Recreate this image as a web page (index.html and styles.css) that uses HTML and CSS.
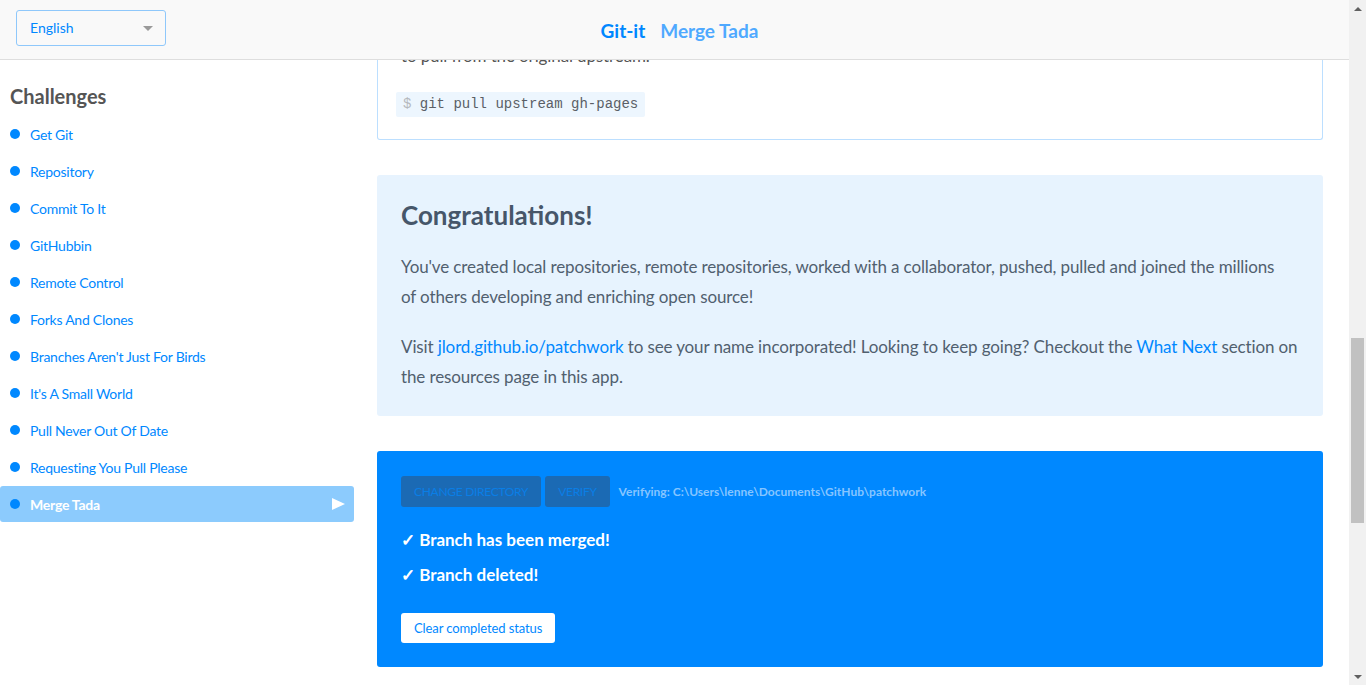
FILE: index.html
```html
<!DOCTYPE html>
<html lang="en">
<head>
<meta charset="utf-8">
<title>Git-it — Merge Tada</title>
<link rel="stylesheet" href="styles.css">
</head>
<body>
<header class="topbar">
  <div class="lang">
    <span class="lang-label">English</span>
    <span class="lang-caret"></span>
  </div>
  <h1 class="title"><span class="title-app">Git-it</span><span class="title-challenge">Merge Tada</span></h1>
</header>

<nav class="sidebar">
  <h2 class="sidebar-heading">Challenges</h2>
  <ul class="challenge-list">
    <li class="challenge"><span class="dot"></span>Get Git</li>
    <li class="challenge"><span class="dot"></span>Repository</li>
    <li class="challenge"><span class="dot"></span>Commit To It</li>
    <li class="challenge"><span class="dot"></span>GitHubbin</li>
    <li class="challenge"><span class="dot"></span>Remote Control</li>
    <li class="challenge"><span class="dot"></span>Forks And Clones</li>
    <li class="challenge"><span class="dot"></span>Branches Aren't Just For Birds</li>
    <li class="challenge"><span class="dot"></span>It's A Small World</li>
    <li class="challenge"><span class="dot"></span>Pull Never Out Of Date</li>
    <li class="challenge"><span class="dot"></span>Requesting You Pull Please</li>
    <li class="challenge active"><span class="dot"></span>Merge Tada<span class="arrow"></span></li>
  </ul>
</nav>

<main class="content">
  <section class="card lesson">
    <p>If anyone else has made changes to the original repository since you forked it, you'll want<br>to pull from the original upstream.</p>
    <div class="cmd"><code><span class="prompt">$</span> git pull upstream gh-pages</code></div>
  </section>

  <section class="card congrats">
    <h2 class="congrats-title">Congratulations!</h2>
    <p>You've created local repositories, remote repositories, worked with a collaborator, pushed, pulled and joined the millions of&nbsp;others developing and enriching open source!</p>
    <p>Visit <a href="#">jlord.github.io/patchwork</a> to see your name incorporated! Looking to keep going? Checkout the <a href="#">What Next</a> section on the resources page in this app.</p>
  </section>

  <section class="card verify">
    <div class="verify-bar">
      <button class="btn-dim">Change Directory</button>
      <button class="btn-dim">Verify</button>
      <span class="verify-path">Verifying: C:\Users\lenne\Documents\GitHub\patchwork</span>
    </div>
    <p class="status">✓ Branch has been merged!</p>
    <p class="status">✓ Branch deleted!</p>
    <button class="btn-clear">Clear completed status</button>
  </section>
</main>

<div class="scrollbar" aria-hidden="true">
  <span class="scroll-btn"><span class="tri-up"></span></span>
  <span class="scroll-track"><span class="scroll-thumb"></span></span>
  <span class="scroll-btn"><span class="tri-down"></span></span>
</div>
</body>
</html>
```

FILE: styles.css
```css
body {
  margin: 0;
  font-family: Lato, "Open Sans", sans-serif;
  color: #4f5e70;
  background: #fff;
}

/* ---------- top bar ---------- */
.topbar {
  position: fixed;
  top: 0;
  left: 0;
  right: 17px;
  height: 59px;
  background: #f9f9f9;
  border-bottom: 1px solid #dedede;
  display: grid;
  grid-template-columns: 1fr auto 1fr;
  align-items: center;
  z-index: 10;
}
.lang {
  grid-column: 1;
  justify-self: start;
  align-self: start;
  margin: 10px 0 0 16px;
  box-sizing: border-box;
  width: 150px;
  height: 36px;
  border: 1px solid #8fc8fb;
  border-radius: 3px;
  display: flex;
  align-items: center;
  padding: 0 12px 0 13px;
  font-size: 14px;
  color: #0088ff;
}
.lang-label {
  flex: 1;
  margin-top: -2px;
}
.lang-caret {
  width: 0;
  height: 0;
  border-left: 5px solid transparent;
  border-right: 5px solid transparent;
  border-top: 5px solid #9a9a9a;
}
.title {
  grid-column: 2;
  margin: 2px 0 0;
  padding-left: 10px;
  font-size: 19px;
  font-weight: 700;
  line-height: 24px;
  display: flex;
  gap: 15px;
}
.title-app {
  color: #0087ff;
}
.title-challenge {
  color: #4fa9ff;
}

/* ---------- sidebar ---------- */
.sidebar {
  position: fixed;
  top: 60px;
  left: 0;
  bottom: 0;
  width: 354px;
  padding-top: 24px;
  background: #fff;
  z-index: 5;
}
.sidebar-heading {
  margin: 0 0 8px 10px;
  font-size: 20px;
  line-height: 24px;
  font-weight: 700;
  color: #555;
}
.challenge-list {
  list-style: none;
  margin: 0;
  padding: 0;
  display: flex;
  flex-direction: column;
  gap: 1px;
}
.challenge {
  height: 36px;
  display: flex;
  align-items: center;
  font-size: 14px;
  letter-spacing: -0.25px;
  color: #0088ff;
  border-radius: 3px;
}
.dot {
  width: 10px;
  height: 10px;
  border-radius: 50%;
  background: #0088ff;
  margin: -1px 10px 0 10px;
  flex: none;
}
.challenge.active {
  background: #8ccbfd;
  color: #fff;
  font-weight: 700;
}
.arrow {
  margin-left: auto;
  margin-right: 9px;
  width: 0;
  height: 0;
  border-left: 13px solid #fff;
  border-top: 6px solid transparent;
  border-bottom: 6px solid transparent;
}

/* ---------- content ---------- */
.content {
  margin-left: 377px;
  width: 946px;
  display: flex;
  flex-direction: column;
  gap: 35px;
}
.card {
  border-radius: 3px;
}
.lesson {
  border: 1px solid #bcdfff;
  border-top: none;
  border-radius: 0 0 3px 3px;
  padding: 11px 23px 22px;
  color: #555;
}
.lesson p {
  margin: 0 0 21px;
  font-size: 17px;
  line-height: 30px;
  letter-spacing: -0.12px;
}
.cmd code {
  display: inline-block;
  margin-left: -5px;
  padding: 0 7px;
  height: 25px;
  line-height: 25px;
  background: #edf6fe;
  border-radius: 2px;
  font-family: "Liberation Mono", "Courier New", monospace;
  font-size: 14px;
  color: #5a5f66;
}
.prompt {
  color: #b5b9bd;
}

.congrats {
  background: #e7f3fe;
  padding: 24px 24px 24px;
}
.congrats-title {
  margin: 0 0 21px;
  font-size: 26px;
  line-height: 32px;
  font-weight: 700;
  color: #46566a;
}
.congrats p {
  margin: 0 0 20px;
  font-size: 17px;
  line-height: 30px;
  letter-spacing: -0.12px;
  color: #51606f;
}
.congrats p:last-child {
  margin-bottom: 0;
}
.congrats a {
  color: #0088ff;
  text-decoration: none;
}

.verify {
  background: #0088ff;
  padding: 25px 24px 24px;
  color: #fff;
}
.verify-bar {
  display: flex;
  align-items: center;
  gap: 4px;
}
.btn-dim {
  height: 31px;
  padding: 0 13px;
  border: none;
  border-radius: 3px;
  background: #1b6ab4;
  color: #0a7ee6;
  font-family: Lato, "Open Sans", sans-serif;
  font-size: 12px;
  letter-spacing: -0.3px;
  text-transform: uppercase;
}
.verify-path {
  margin-left: 5px;
  font-size: 12px;
  font-weight: 700;
  color: #86c5ff;
}
.status {
  margin: 21px 0 0;
  font-size: 17px;
  line-height: 24px;
  font-weight: 700;
}
.status + .status {
  margin-top: 11px;
}
.btn-clear {
  display: block;
  margin-top: 26px;
  height: 30px;
  padding: 0 13px;
  border: none;
  border-radius: 3px;
  background: #fff;
  color: #0088ff;
  font-family: Lato, "Open Sans", sans-serif;
  font-size: 13px;
  letter-spacing: -0.1px;
}

/* ---------- window scrollbar ---------- */
.scrollbar {
  position: fixed;
  top: 0;
  right: 0;
  bottom: 0;
  width: 17px;
  background: #f1f1f1;
  display: flex;
  flex-direction: column;
  z-index: 20;
}
.scroll-btn {
  height: 17px;
  flex: none;
  display: flex;
  align-items: center;
  justify-content: center;
}
.tri-up {
  width: 0;
  height: 0;
  border-left: 4px solid transparent;
  border-right: 4px solid transparent;
  border-bottom: 4px solid #606060;
}
.tri-down {
  width: 0;
  height: 0;
  border-left: 4px solid transparent;
  border-right: 4px solid transparent;
  border-top: 4px solid #606060;
}
.scroll-track {
  flex: 1;
  display: flex;
  flex-direction: column;
  padding: 0 2px;
}
.scroll-thumb {
  margin-top: 321px;
  height: 185px;
  background: #c1c1c1;
}
```
